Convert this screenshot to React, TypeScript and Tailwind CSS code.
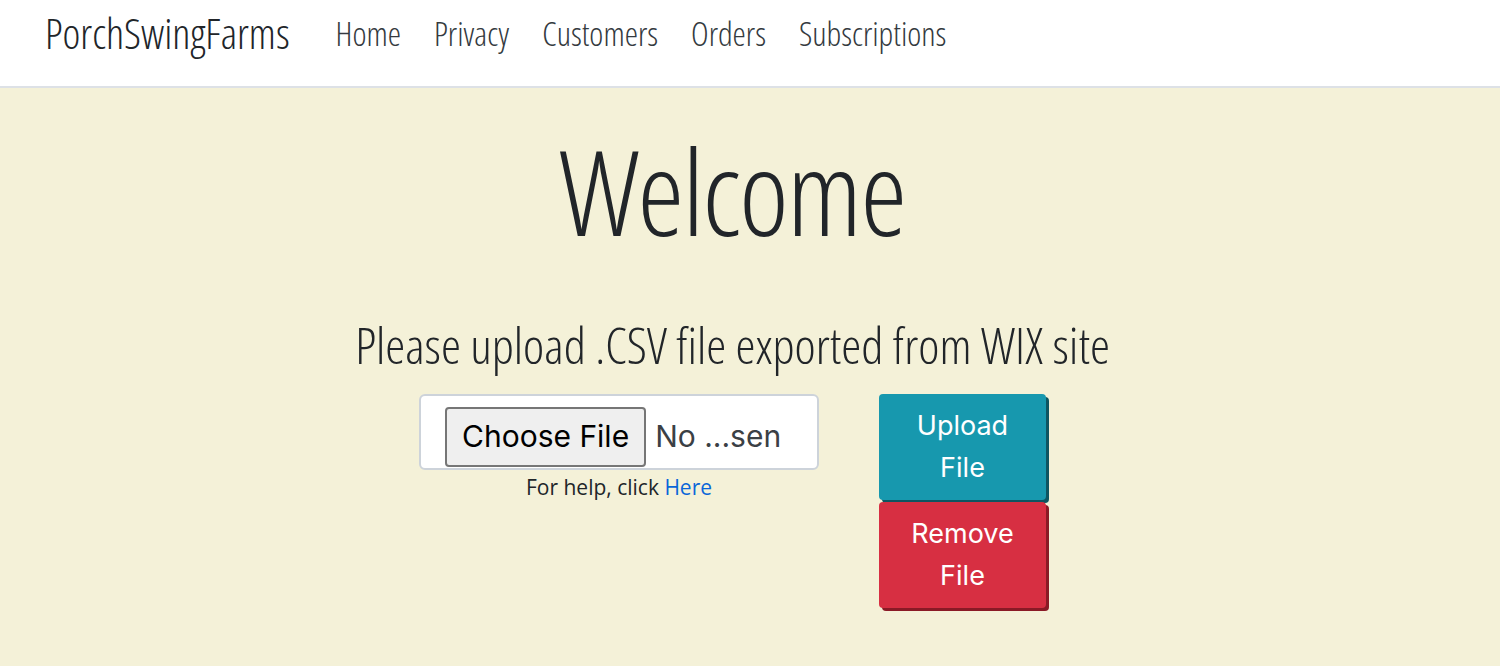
import React from 'react';

const links = ['Home', 'Privacy', 'Customers', 'Orders', 'Subscriptions'];

// condensed Open Sans stands in for the heading face
const cond = "font-['Open_Sans',sans-serif] [font-stretch:75%]";

export default function App() {
  return (
    <div className="min-h-[666px] bg-[#f4f1d8]">
      <nav className="h-[88px] bg-white border-b-2 border-[#dde1e6] flex items-center px-[45px] pb-[20px]">
        <a className={`${cond} font-light text-[42.5px] text-[#212529] mr-[46px]`}>PorchSwingFarms</a>
        <ul className="flex gap-[33px]">
          {links.map((l) => (
            <li key={l} className={`${cond} font-light text-[33.5px] text-[#343a40]`}>{l}</li>
          ))}
        </ul>
      </nav>

      <main className="flex flex-col items-center pr-[35px] text-[#212529]">
        <h1 className={`${cond} font-light text-[118px] leading-none tracking-[-1.6px] mt-[44px]`}>Welcome</h1>
        <h2 className={`${cond} font-light text-[50.5px] leading-none mt-[70px]`}>Please upload .CSV file exported from WIX site</h2>

        <div className="flex items-start gap-[60px] mt-[23px]">
          <div className="flex flex-col items-center">
            <div className="w-[400px] h-[76px] bg-white border-2 border-[#cdd3da] rounded-[6px] flex items-end pl-[24px] pb-[1px]">
              <span className="h-[60px] px-[15px] flex items-center bg-[#efefef] border-2 border-[#767676] rounded-[4px] font-['Inter',sans-serif] text-[30px] text-black">
                Choose File
              </span>
              <span className="h-[60px] flex items-center ml-[9px] font-['Inter',sans-serif] text-[30px] text-[#3b4045]">No ...sen</span>
            </div>
            <p className="mt-[2px] font-['Open_Sans',sans-serif] text-[21px] text-[#212529]">
              For help, click <a className="text-[#0a66d8]">Here</a>
            </p>
          </div>

          <div className="flex flex-col gap-[2px]">
            <button className="w-[167px] h-[106px] bg-[#1798ae] rounded-[4px] shadow-[3px_3px_0_#0d5561] font-['Inter',sans-serif] text-[27px] leading-[42px] text-white">
              Upload<br />File
            </button>
            <button className="w-[167px] h-[106px] bg-[#d72f42] rounded-[4px] shadow-[3px_3px_0_#8a1a26] font-['Inter',sans-serif] text-[27px] leading-[42px] text-white">
              Remove<br />File
            </button>
          </div>
        </div>
      </main>
    </div>
  );
}
